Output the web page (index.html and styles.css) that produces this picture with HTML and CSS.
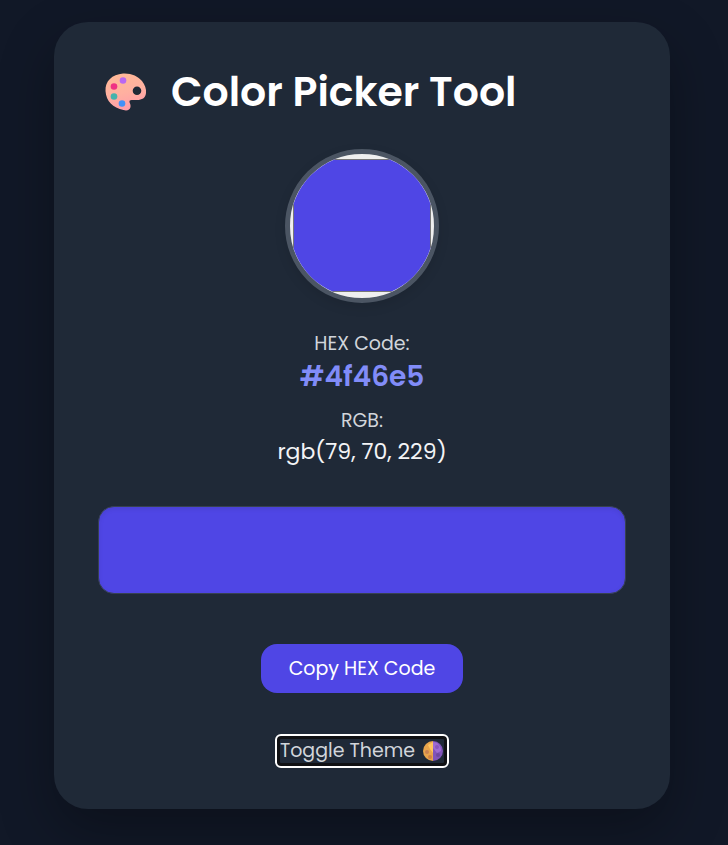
FILE: index.html
```html
<!DOCTYPE html>
<html lang="en">
<head>
<meta charset="utf-8">
<meta name="viewport" content="width=device-width, initial-scale=1">
<title>Color Picker Tool</title>
<link rel="stylesheet" href="styles.css">
</head>
<body>
<main class="card">
  <h1 class="title">
    <svg class="palette" viewBox="0 0 42 38" aria-hidden="true">
      <defs>
        <linearGradient id="paint" x1="0" y1="0" x2="0.3" y2="1">
          <stop offset="0" stop-color="#ffba96"/>
          <stop offset="0.6" stop-color="#ffb0a0"/>
          <stop offset="1" stop-color="#ff9fa8"/>
        </linearGradient>
      </defs>
      <path fill="url(#paint)" fill-rule="evenodd" d="M18 .5C26 0 33 3 37 8c3 4 4.500 8 4 12-.5 5-4 7-9 7-4 0-7-.5-7.500 1-.5 1.500 1.500 3 1 6-.5 3-3.500 4-7 3C8 35 1 28 .5 18 0 8 7 1.500 18 .5ZM32 13.500a4.300 4.300 0 1 0 0 8.600 4.300 4.300 0 0 0 0-8.600Z"/>
      <circle cx="18" cy="7.500" r="3.300" fill="#b967f2"/>
      <circle cx="9" cy="13.500" r="3.300" fill="#ef3284"/>
      <circle cx="9" cy="23.500" r="3.300" fill="#45b3ac"/>
      <circle cx="17" cy="30.500" r="3.300" fill="#4291f7"/>
    </svg>
    <span>Color Picker Tool</span>
  </h1>
  <input class="picker" type="color" value="#4f46e5" aria-label="Pick a color">
  <section class="codes">
    <p class="label">HEX Code:</p>
    <p class="hex">#4f46e5</p>
    <p class="label">RGB:</p>
    <p class="rgb">rgb(79, 70, 229)</p>
  </section>
  <div class="preview"></div>
  <button class="copy" type="button">Copy HEX Code</button>
  <button class="toggle" type="button">
    <span>Toggle Theme</span>
    <svg class="moon" viewBox="0 0 20 20" aria-hidden="true">
      <path fill="#e8a44c" d="M10 0a10 10 0 0 0 0 20Z"/>
      <path fill="#8054ba" d="M10 0a10 10 0 0 1 0 20Z"/>
      <path fill="#ffc45e" d="M10 1v11L7 8 5 4Z"/>
      <path fill="#9d6bd2" d="M10 1c5 0 8 4 8 9l-4 2-4-5Z"/>
      <circle cx="4" cy="11" r="2" fill="#c98252"/>
      <circle cx="7" cy="16" r="2" fill="#cf8146"/>
      <circle cx="14" cy="6" r="2" fill="#8856bd"/>
      <circle cx="15" cy="14" r="2" fill="#6e479f"/>
    </svg>
  </button>
</main>
</body>
</html>
```
FILE: styles.css
```css
* { box-sizing: border-box; }

body {
  margin: 0;
  min-height: 100vh;
  padding: 22px 58px 36px 54px;
  background: #111827;
  color: #f3f4f6;
  font-family: Poppins, Inter, "Open Sans", sans-serif;
}

.card {
  display: flex;
  flex-direction: column;
  align-items: center;
  max-width: 616px;
  margin: 0 auto;
  padding: 37px 44px 43px;
  border-radius: 34px;
  background: #1f2937;
  box-shadow: 0 22px 55px rgba(0, 0, 0, 0.3);
}

.title {
  display: flex;
  align-items: center;
  gap: 24px;
  width: 100%;
  margin: 0 0 24px;
  padding-left: 7px;
  color: #ffffff;
  font-size: 41px;
  font-weight: 600;
  line-height: 66px;
  white-space: nowrap;
}

.palette { flex: none; width: 42px; height: 38px; }

.picker {
  width: 154px;
  height: 154px;
  margin: 0 0 28px;
  padding: 0;
  border: 5px solid #4b5563;
  border-radius: 50%;
  background: #efefef;
  box-shadow: 0 4px 12px rgba(0, 0, 0, 0.1);
  overflow: hidden;
  cursor: pointer;
  appearance: none;
}

.picker::-webkit-color-swatch-wrapper { padding: 5px 3px 6px; }
.picker::-webkit-color-swatch { border: 1px solid #777777; border-radius: 0; }

.codes { text-align: center; }
.codes p { margin: 0; }

.label {
  color: #d1d5db;
  font-size: 19px;
  line-height: 26px;
}

.codes .hex {
  margin-bottom: 11px;
  color: #818cf8;
  font-size: 28px;
  font-weight: 600;
  line-height: 40px;
}

.rgb { font-size: 22px; line-height: 36px; }

.preview {
  width: 100%;
  height: 88px;
  margin: 36px 0 50px;
  border: 1px solid #374151;
  border-radius: 16px;
  background: #4f46e5;
  box-shadow: inset 0 2px 5px rgba(0, 0, 0, 0.08);
}

button {
  border: 0;
  font-family: inherit;
  font-size: 19px;
  white-space: nowrap;
  cursor: pointer;
}

.copy {
  padding: 10px 28px;
  border-radius: 16px;
  background: #4f46e5;
  color: #ffffff;
  line-height: 29px;
}

.toggle {
  display: flex;
  align-items: center;
  gap: 8px;
  margin-top: 43px;
  padding: 0 1px 0 0;
  border: 3px solid #101114;
  border-radius: 4px;
  outline: 2px solid #ffffff;
  background: transparent;
  color: #d1d5db;
  line-height: 24px;
}

.moon { width: 20px; height: 20px; }
```
